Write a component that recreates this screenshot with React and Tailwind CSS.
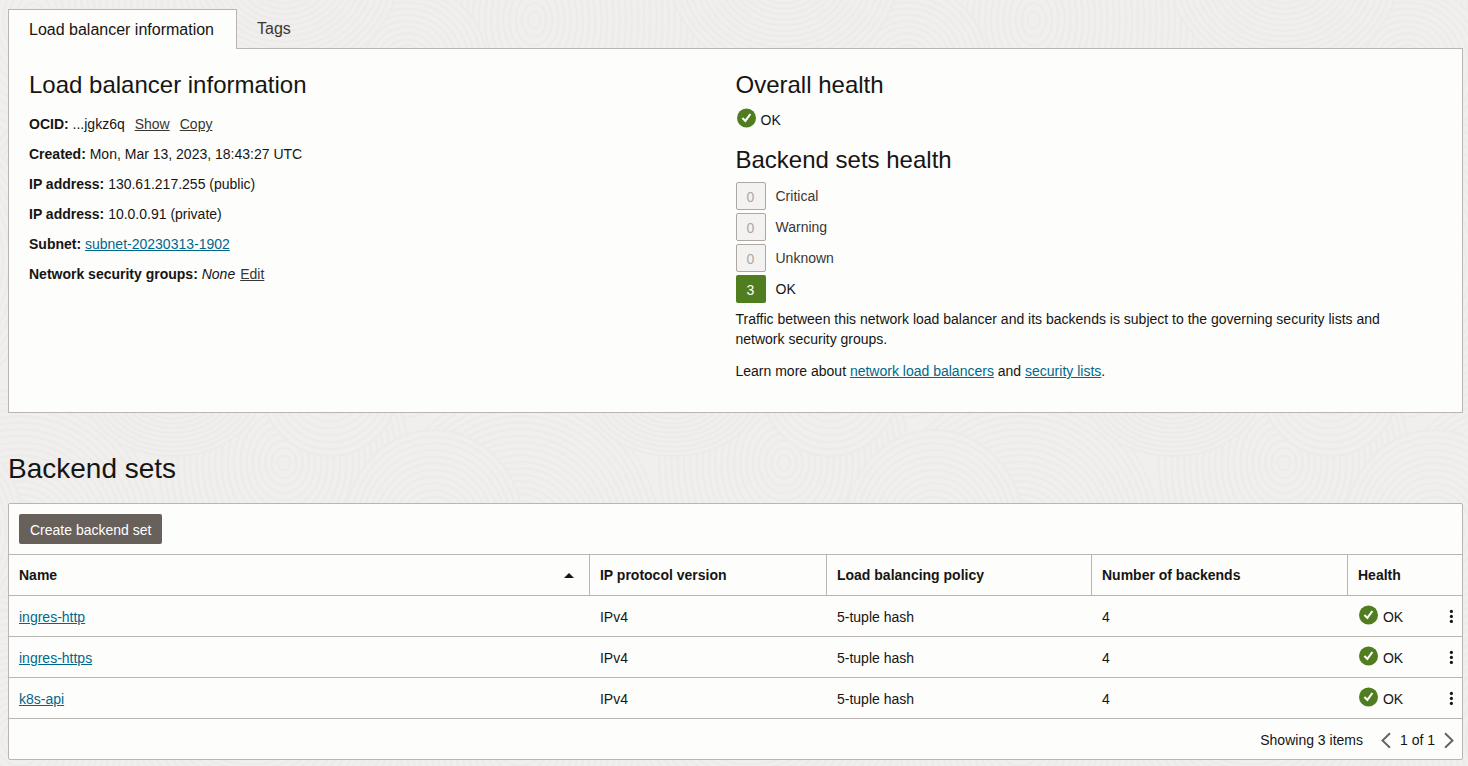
import React from "react";

const backendSets = [
  { name: "ingres-http", ip: "IPv4", policy: "5-tuple hash", count: 4 },
  { name: "ingres-https", ip: "IPv4", policy: "5-tuple hash", count: 4 },
  { name: "k8s-api", ip: "IPv4", policy: "5-tuple hash", count: 4 },
];

const healthCounts = [
  { label: "Critical", value: 0 },
  { label: "Warning", value: 0 },
  { label: "Unknown", value: 0 },
  { label: "OK", value: 3 },
];

// Concentric swirls of the page texture; later ones cover earlier ones.
const swirls = [
  { cx: 34, cy: 20, rx: 190, ry: 260 },
  { cx: 407, cy: 64, rx: 80, ry: 80 },
  { cx: 284, cy: -30, rx: 115, ry: 105 },
  { cx: 120, cy: 230, rx: 150, ry: 150 },
  { cx: 380, cy: 260, rx: 160, ry: 160 },
  { cx: 20, cy: 540, rx: 140, ry: 150 },
  { cx: 284, cy: 463, rx: 125, ry: 150 },
  { cx: 434, cy: 530, rx: 90, ry: 100 },
  { cx: 173, cy: 386, rx: 90, ry: 70 },
  { cx: 330, cy: 380, rx: 70, ry: 76 },
  { cx: 250, cy: 700, rx: 170, ry: 150 },
  { cx: 20, cy: 740, rx: 120, ry: 130 },
];

function Swirl({ cx, cy, rx, ry }) {
  const count = Math.floor(rx / 6);
  return (
    <g>
      {Array.from({ length: count }, (_, i) => {
        const t = (count - i) / count;
        return (
          <ellipse key={i} cx={cx} cy={cy} rx={rx * t} ry={ry * t} fill="#f0efed" stroke="#ecebe9" strokeWidth="2" />
        );
      })}
    </g>
  );
}

function Texture() {
  return (
    <svg className="absolute inset-0 -z-10 h-full w-full" aria-hidden="true">
      <defs>
        <pattern id="swirls" width="500" height="800" patternUnits="userSpaceOnUse">
          {swirls.map((s, i) => (
            <g key={i}>
              <Swirl {...s} cx={s.cx - 500} />
              <Swirl {...s} />
              <Swirl {...s} cx={s.cx + 500} />
            </g>
          ))}
        </pattern>
      </defs>
      <rect width="100%" height="100%" fill="url(#swirls)" />
    </svg>
  );
}

function OkStatus() {
  return (
    <span className="flex h-5 items-center gap-[5px]">
      <svg viewBox="0 0 20 20" className="mb-[5px] size-5 shrink-0" aria-hidden="true">
        <circle cx="10.5" cy="10" r="9.5" fill="#4f7d1f" />
        <path d="M6.4 9.9l3 3 5-6.9" fill="none" stroke="#fff" strokeWidth="2.1" />
      </svg>
      OK
    </span>
  );
}

function Info({ label, children }) {
  return (
    <div>
      <dt className="inline font-bold">{label}:</dt> <dd className="inline">{children}</dd>
    </div>
  );
}

const link = "text-[#00688c] underline underline-offset-1";
const action = "text-[#3a3632] underline underline-offset-1";
const th = "h-[41px] border-b border-[#bab5b0] px-[10px] text-left font-bold";
const td = "h-[41px] border-b border-[#bab5b0] px-[10px] pt-[2px]";

export default function App() {
  return (
    <main className="relative isolate min-h-screen overflow-hidden bg-[#f0efed] pt-[9px] pr-[5px] pb-[6px] pl-2 font-['Liberation_Sans',Arial,sans-serif] text-sm leading-5 text-[#161513]">
      <Texture />

      <div role="tablist" className="flex text-base leading-6">
        <button
          role="tab"
          aria-selected="true"
          className="z-10 -mb-px h-10 border border-b-0 border-[#bab5b0] bg-[#fdfdfc] pr-[22px] pl-5"
        >
          Load balancer information
        </button>
        <button role="tab" aria-selected="false" className="h-[39px] px-5 text-[#3a3632]">
          Tags
        </button>
      </div>

      <section className="grid grid-cols-2 border border-[#bab5b0] bg-[#fdfdfc] px-5 pt-5 pb-[31px]">
        <div>
          <h2 className="text-2xl leading-8">Load balancer information</h2>
          <dl className="mt-[13px] flex flex-col gap-[10px]">
            <Info label="OCID">
              ...jgkz6q
              <button className={`ml-[10px] ${action}`}>Show</button>
              <button className={`ml-[10px] ${action}`}>Copy</button>
            </Info>
            <Info label="Created">Mon, Mar 13, 2023, 18:43:27 UTC</Info>
            <Info label="IP address">130.61.217.255 (public)</Info>
            <Info label="IP address">10.0.0.91 (private)</Info>
            <Info label="Subnet">
              <a href="#subnet" className={link}>subnet-20230313-1902</a>
            </Info>
            <Info label="Network security groups">
              <i>None</i>
              <button className={`ml-[5px] ${action}`}>Edit</button>
            </Info>
          </dl>
        </div>

        <div>
          <h2 className="text-2xl leading-8">Overall health</h2>
          <div className="mt-[9px]">
            <OkStatus />
          </div>
          <h2 className="mt-[14px] text-2xl leading-8">Backend sets health</h2>
          <ul className="mt-[6px] flex flex-col gap-[3px]">
            {healthCounts.map((h) => (
              <li key={h.label} className="flex items-center gap-[10px]">
                <span
                  className={
                    h.value
                      ? "flex h-7 w-[30px] items-center justify-center rounded-xs bg-[#4f7d1f] pt-[2px] text-white"
                      : "flex h-7 w-[30px] items-center justify-center rounded-xs border border-[#aea8a2] bg-[#f3f2f0] pt-[2px] text-[#aea8a2]"
                  }
                >
                  {h.value}
                </span>
                <span className={h.value ? "" : "text-[#3a3632]"}>{h.label}</span>
              </li>
            ))}
          </ul>
          <p className="mt-[6px] pr-5">
            Traffic between this network load balancer and its backends is subject to the governing security lists and
            network security groups.
          </p>
          <p className="mt-3">
            Learn more about <a href="#nlb" className={link}>network load balancers</a> and{" "}
            <a href="#lists" className={link}>security lists</a>.
          </p>
        </div>
      </section>

      <h1 className="mt-[38px] text-[28px] leading-9">Backend sets</h1>

      <section className="mt-4 rounded-xs border border-[#bab5b0] bg-[#fdfdfc]">
        <div className="border-b border-[#bab5b0] p-[10px]">
          <button className="block h-[30px] rounded-xs bg-[#67605b] px-[11px] pt-[2px] text-white">
            Create backend set
          </button>
        </div>
        <table className="w-full table-fixed border-separate border-spacing-0">
          <colgroup>
            <col />
            <col className="w-[237px]" />
            <col className="w-[265px]" />
            <col className="w-[256px]" />
            <col className="w-[80px]" />
            <col className="w-[34px]" />
          </colgroup>
          <thead>
            <tr>
              <th className={`${th} border-r`} aria-sort="ascending">
                <span className="flex items-center justify-between">
                  Name
                  <svg viewBox="0 0 10 5" className="mr-[5px] h-[5px] w-[10px]" aria-hidden="true">
                    <path d="M0 5L5 0l5 5z" fill="#161513" />
                  </svg>
                </span>
              </th>
              <th className={`${th} border-r`}>IP protocol version</th>
              <th className={`${th} border-r`}>Load balancing policy</th>
              <th className={`${th} border-r`}>Number of backends</th>
              <th className={th} colSpan={2}>Health</th>
            </tr>
          </thead>
          <tbody>
            {backendSets.map((b) => (
              <tr key={b.name}>
                <td className={td}>
                  <a href={`#${b.name}`} className={link}>{b.name}</a>
                </td>
                <td className={td}>{b.ip}</td>
                <td className={td}>{b.policy}</td>
                <td className={td}>{b.count}</td>
                <td className={td}>
                  <OkStatus />
                </td>
                <td className="border-b border-[#bab5b0]">
                  <button aria-label={`Actions for ${b.name}`} className="ml-auto flex h-8 w-[22px] items-center justify-center">
                    <svg viewBox="0 0 4 14" className="h-[14px] w-1" aria-hidden="true">
                      <circle cx="2.4" cy="2.4" r="1.6" fill="#161513" />
                      <circle cx="2.4" cy="7.4" r="1.6" fill="#161513" />
                      <circle cx="2.4" cy="12.4" r="1.6" fill="#161513" />
                    </svg>
                  </button>
                </td>
              </tr>
            ))}
          </tbody>
        </table>
        <div className="flex h-10 items-center justify-end pt-[2px] pr-2">
          <span>Showing 3 items</span>
          <button aria-label="Previous page" className="ml-[18px]">
            <svg viewBox="0 0 10 16" className="h-4 w-[10px]" fill="none" stroke="#67605b" strokeWidth="1.9" aria-hidden="true">
              <path d="M9 1.2L1.5 8.5 9 15.8" />
            </svg>
          </button>
          <span className="mx-[9px]">1 of 1</span>
          <button aria-label="Next page">
            <svg viewBox="0 0 10 16" className="h-4 w-[10px]" fill="none" stroke="#67605b" strokeWidth="1.9" aria-hidden="true">
              <path d="M1 1.2L8.5 8.5 1 15.8" />
            </svg>
          </button>
        </div>
      </section>
    </main>
  );
}
